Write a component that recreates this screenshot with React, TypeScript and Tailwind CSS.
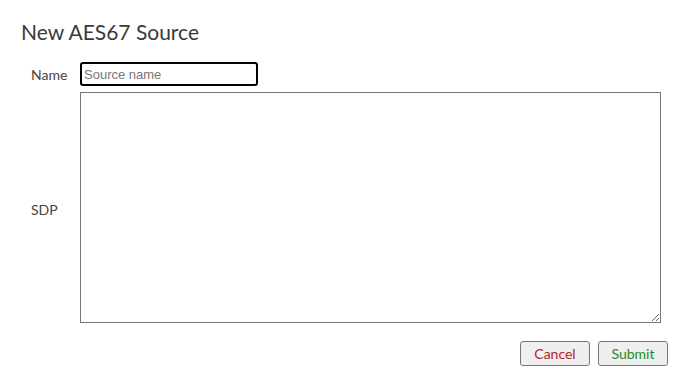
export default function App() {
  return (
    <div className="w-[690px] h-[390px] bg-white text-[#444] font-['Lato',sans-serif]">
      <div className="pl-[21px] pt-[19px]">
        <h1 className="text-[21px] leading-[26px] font-normal text-[#3a3a3a]">New AES67 Source</h1>
        <div className="mt-[17px] flex flex-col gap-[6px]">
          <div className="flex items-center">
            <div className="w-[59px] pl-[10px] text-[14px]">Name</div>
            <input
              autoFocus
              placeholder="Source name"
              className="w-[178px] h-[24px] border-2 border-black rounded-[3px] px-[2px] text-[13px] font-['Liberation_Sans',sans-serif] outline-none caret-black placeholder:text-[#757575]"
            />
          </div>
          <div className="flex items-center">
            <div className="w-[59px] pl-[10px] pt-[4px] text-[14px]">SDP</div>
            <textarea className="w-[581px] h-[231px] border border-[#767676] text-[13px] font-['Liberation_Mono',monospace]" />
          </div>
        </div>
        <div className="mt-[18px] flex justify-end gap-[8px] pr-[22px]">
          <button className="w-[70px] h-[25px] border border-[#767676] rounded-[3px] bg-[#efefef] text-[14px] text-[#b22222]">Cancel</button>
          <button className="w-[70px] h-[25px] border border-[#767676] rounded-[3px] bg-[#efefef] text-[14px] text-[#228b22]">Submit</button>
        </div>
      </div>
    </div>
  );
}
